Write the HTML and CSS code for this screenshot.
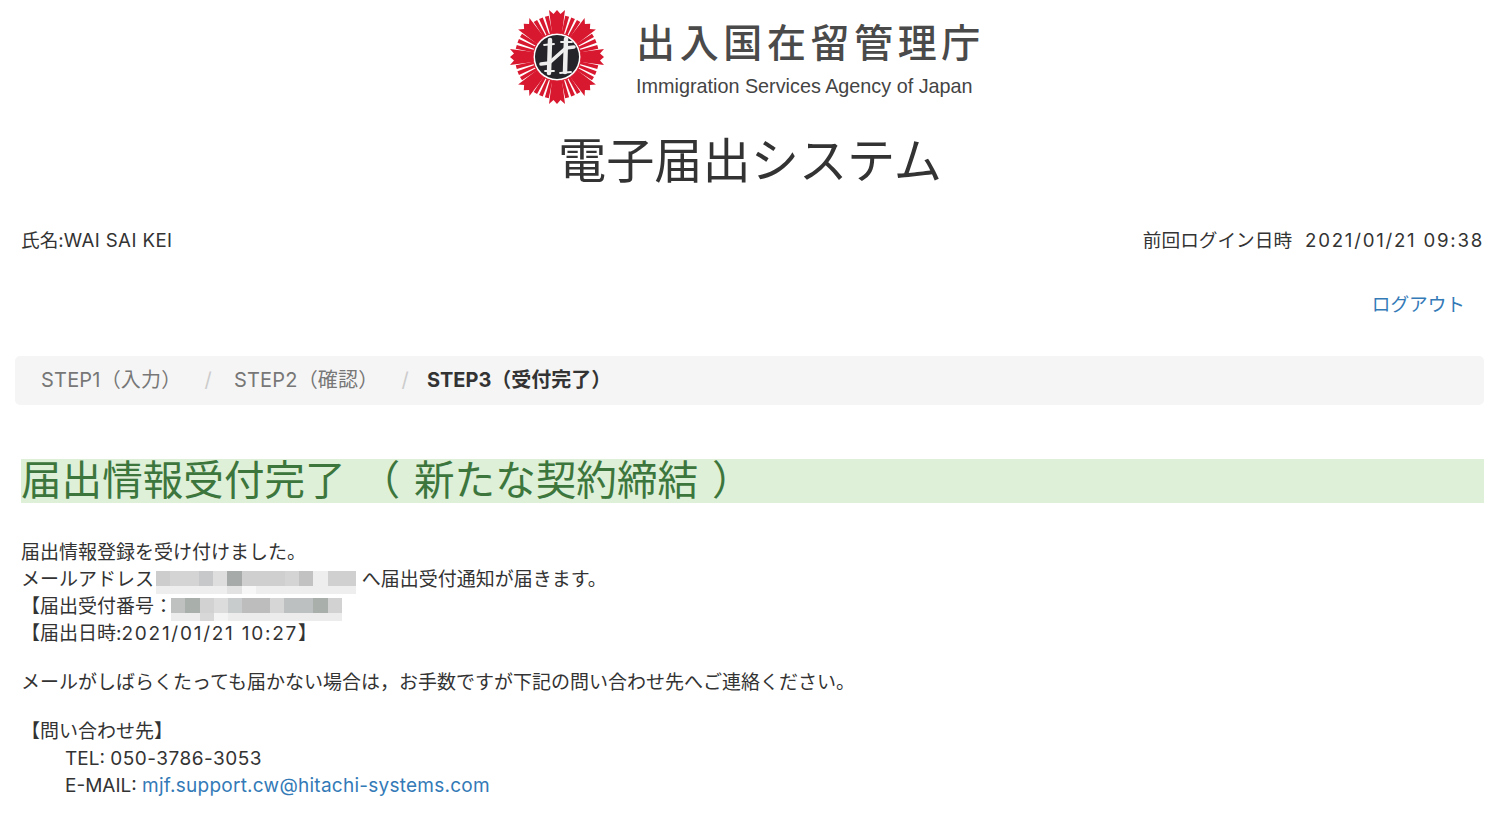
FILE: index.html
```html
<!DOCTYPE html>
<html lang="ja">
<head>
    <meta charset="UTF-8">
    <title>電子届出システム</title>
    <link rel="stylesheet" href="styles.css">
</head>
<body>

    <header class="site-header">
        <div class="logo">
            <svg class="emblem" width="96" height="96" viewBox="-48 -48 96 96">
                <defs>
                    <polygon id="big" points="-4.5,-20 4.5,-20 8,-47 3.5,-43 0,-47 -3.5,-43 -8,-47"/>
                    <polygon id="ray" points="-1.1,-20 1.1,-20 2,-42 -2,-42"/>
                </defs>
                <g fill="#d8182e">
                    <use href="#big"/>
                    <use href="#big" transform="rotate(45)"/>
                    <use href="#big" transform="rotate(90)"/>
                    <use href="#big" transform="rotate(135)"/>
                    <use href="#big" transform="rotate(180)"/>
                    <use href="#big" transform="rotate(225)"/>
                    <use href="#big" transform="rotate(270)"/>
                    <use href="#big" transform="rotate(315)"/>
                    <use href="#ray" transform="rotate(14)"/>
                    <use href="#ray" transform="rotate(22.5)"/>
                    <use href="#ray" transform="rotate(31)"/>
                    <use href="#ray" transform="rotate(59)"/>
                    <use href="#ray" transform="rotate(67.5)"/>
                    <use href="#ray" transform="rotate(76)"/>
                    <use href="#ray" transform="rotate(104)"/>
                    <use href="#ray" transform="rotate(112.5)"/>
                    <use href="#ray" transform="rotate(121)"/>
                    <use href="#ray" transform="rotate(149)"/>
                    <use href="#ray" transform="rotate(157.5)"/>
                    <use href="#ray" transform="rotate(166)"/>
                    <use href="#ray" transform="rotate(194)"/>
                    <use href="#ray" transform="rotate(202.5)"/>
                    <use href="#ray" transform="rotate(211)"/>
                    <use href="#ray" transform="rotate(239)"/>
                    <use href="#ray" transform="rotate(247.5)"/>
                    <use href="#ray" transform="rotate(256)"/>
                    <use href="#ray" transform="rotate(284)"/>
                    <use href="#ray" transform="rotate(292.5)"/>
                    <use href="#ray" transform="rotate(301)"/>
                    <use href="#ray" transform="rotate(329)"/>
                    <use href="#ray" transform="rotate(337.5)"/>
                    <use href="#ray" transform="rotate(346)"/>
                </g>
                <circle r="24" fill="#fff" stroke="#d8182e" stroke-width="1"/>
                <circle r="22" fill="#24242a"/>
                <g fill="none" stroke="#eee" stroke-linecap="round">
                    <path d="M-7 -17 L-8 16" stroke-width="4.5"/>
                    <path d="M9 -18 L8 15" stroke-width="4.5"/>
                    <path d="M-16 7 L-8 6 L9 -9 L17 -10" stroke-width="3.5"/>
                    <path d="M-13 -12 L-3 -13 M4 -15 L15 -15 M-12 14 L-3 14 M3 16 L14 15" stroke-width="1.8"/>
                </g>
            </svg>
            <div class="logo-text">
                <div class="logo-ja">出入国在留管理庁</div>
                <div class="logo-en">Immigration Services Agency of Japan</div>
            </div>
        </div>
        <h1>電子届出システム</h1>
    </header>

    <main class="container">
        <div class="user-row">
            <span>氏名:<span class="name">WAI SAI KEI</span></span>
            <span class="login-info">前回ログイン日時<span class="num last-login">2021/01/21 09:38</span></span>
        </div>
        <div class="logout-row"><a href="#">ログアウト</a></div>

        <ol class="breadcrumb">
            <li>STEP1（入力）</li>
            <li class="sep">/</li>
            <li>STEP2（確認）</li>
            <li class="sep">/</li>
            <li class="active">STEP3（受付完了）</li>
        </ol>

        <h2 class="done">届出情報受付完了 （ 新たな契約締結 ）</h2>

        <div class="message">
            <p>届出情報登録を受け付けました。</p>
            <p>
                メールアドレス
                <svg class="masked address" width="200" height="23" viewBox="0 0 200 23">
                    <rect width="200" height="15" fill="#d4d4d4"/>
                    <rect y="15" width="200" height="8" fill="#eeeeee"/>
                    <rect width="14" height="15" fill="#cdcdcd"/>
                    <rect x="43" width="14" height="15" fill="#c6c8ca"/>
                    <rect x="57" width="14" height="15" fill="#dedede"/>
                    <rect x="71" width="15" height="15" fill="#a6aaa8"/>
                    <rect x="86" width="43" height="15" fill="#cfcfcf"/>
                    <rect x="143" width="14" height="15" fill="#c2c2c2"/>
                    <rect x="157" width="15" height="15" fill="#eeeeee"/>
                    <rect x="172" width="28" height="15" fill="#d0d0d0"/>
                    <rect x="86" y="15" width="14" height="8" fill="#f7f7f7"/>
                    <rect x="71" y="15" width="15" height="8" fill="#e2e2e2"/>
                </svg>
                へ届出受付通知が届きます。
            </p>
            <p>
                【届出受付番号：<svg class="masked short" width="171" height="23" viewBox="0 0 171 23">
                    <rect width="171" height="15" fill="#d2d2d2"/>
                    <rect y="15" width="171" height="8" fill="#ececec"/>
                    <rect width="14" height="15" fill="#bfc1c0"/>
                    <rect x="14" width="15" height="15" fill="#a9b0ac"/>
                    <rect x="43" width="14" height="15" fill="#dcdcdc"/>
                    <rect x="57" width="14" height="15" fill="#c8cccc"/>
                    <rect x="71" width="28" height="15" fill="#bdbdbd"/>
                    <rect x="99" width="14" height="15" fill="#d6d6d6"/>
                    <rect x="113" width="29" height="15" fill="#bdc0c0"/>
                    <rect x="142" width="15" height="15" fill="#a9b0ac"/>
                    <rect x="29" y="15" width="14" height="8" fill="#d8d8d8"/>
                    <rect x="43" y="15" width="14" height="8" fill="#f4f4f4"/>
                </svg>
            </p>
            <p class="gap">【届出日時:<span class="num">2021/01/21 10:27</span>】</p>
            <p class="gap">メールがしばらくたっても届かない場合は，お手数ですが下記の問い合わせ先へご連絡ください。</p>
            <p>【問い合わせ先】</p>
            <p class="indent">TEL: <span class="tel">050-3786-3053</span></p>
            <p class="indent">E-MAIL: <a class="mail" href="#">mjf.support.cw@hitachi-systems.com</a></p>
        </div>
    </main>

</body>
</html>
```

FILE: styles.css
```css
body {
    margin: 0;
    background: #fff;
    color: #333;
    font-family: "Inter", "Noto Sans CJK JP", sans-serif;
    font-size: 19px;
    line-height: 27px;
}

a {
    color: #337ab7;
    text-decoration: none;
}

.site-header {
    text-align: center;
}

.logo {
    display: flex;
    justify-content: center;
    align-items: flex-start;
    gap: 31px;
    height: 128px;
    padding-top: 9px;
    box-sizing: border-box;
    padding-right: 6px;
}

.logo-text {
    text-align: left;
}

.logo-ja {
    font-size: 39px;
    font-weight: 500;
    line-height: 50px;
    letter-spacing: 4.6px;
    color: #4a4a4a;
    margin-top: 9px;
}

.logo-en {
    font-family: "Liberation Sans", sans-serif;
    font-size: 19.8px;
    line-height: 24px;
    color: #444;
    margin-top: 6px;
}

h1 {
    margin: 0;
    font-size: 48.2px;
    line-height: 66px;
    font-weight: 400;
    color: #333;
}

.container {
    padding: 0 16px 0 15px;
}

.user-row {
    display: flex;
    justify-content: space-between;
    padding-left: 6px;
    margin-top: 33px;
    font-size: 18.67px;
}

.name {
    letter-spacing: 0.4px;
}

.num {
    letter-spacing: 1.75px;
}

.login-info {
    white-space: nowrap;
}

.last-login {
    margin-left: 13px;
}

.logout-row {
    text-align: right;
    padding-right: 19px;
    margin-top: 37px;
    font-size: 18.67px;
}

.breadcrumb {
    display: flex;
    list-style: none;
    margin: 38px 0 0;
    padding: 11px 26px;
    height: 27px;
    background: #f5f5f5;
    border-radius: 5px;
    color: #777;
    font-size: 20px;
    letter-spacing: 0.2px;
}

.breadcrumb .sep {
    color: #ccc;
    padding: 0 22px 0 23px;
}

.breadcrumb .active {
    color: #333;
    font-weight: 700;
    letter-spacing: 0;
    margin-left: -4px;
}

.done {
    margin: 54px 0 0 6px;
    height: 44px;
    font-size: 40.6px;
    line-height: 44px;
    font-weight: 400;
    word-spacing: 2.5px;
    color: #3c763d;
    background: #dff0d8;
}

.message {
    padding-left: 6px;
    margin-top: 36px;
}

.message p {
    margin: 0;
    height: 27px;
}

.message .gap {
    margin-bottom: 22px;
}

.masked {
    vertical-align: -8px;
}

.address {
    margin-left: -3px;
}

.short {
    margin-left: -2px;
}

.message .indent {
    padding-left: 44px;
}

.tel {
    letter-spacing: 0.5px;
}

.mail {
    letter-spacing: 0.25px;
}
```
